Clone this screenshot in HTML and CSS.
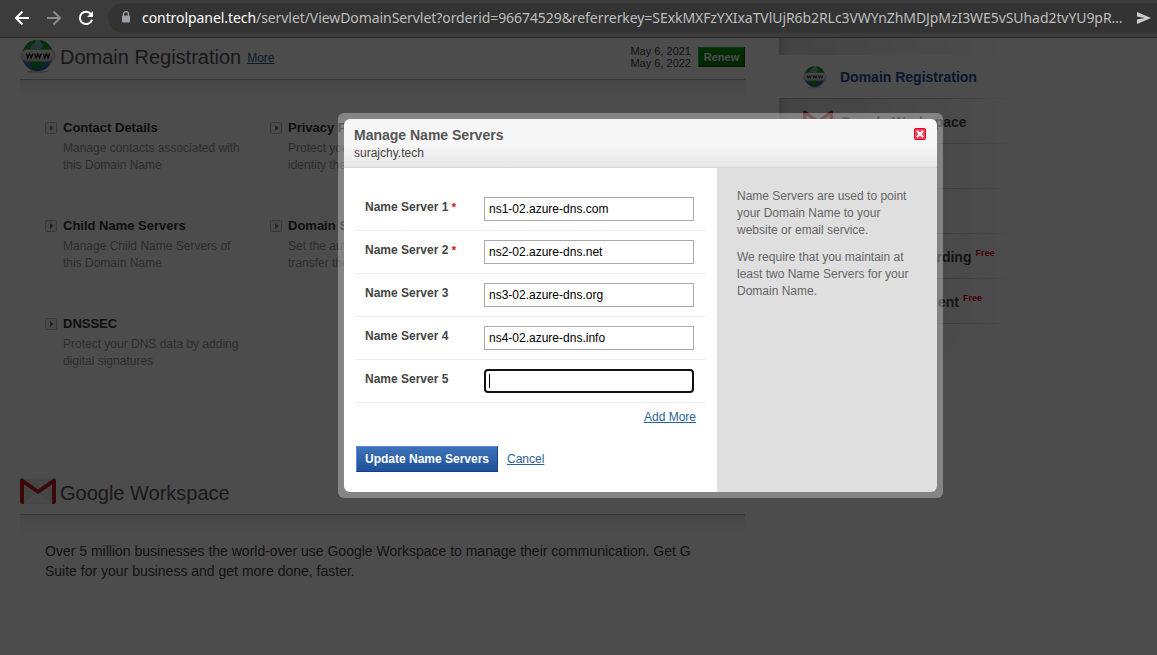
FILE: index.html
```html
<!DOCTYPE html>
<html lang="en">
<head>
<meta charset="utf-8">
<title>Manage Name Servers</title>
<link rel="stylesheet" href="styles.css">
</head>
<body>
<svg class="defs" width="0" height="0" aria-hidden="true">
  <defs>
    <linearGradient id="sea" x1="0" y1="0" x2="0" y2="1"><stop offset="0" stop-color="#8fc89a"/><stop offset=".5" stop-color="#5b9fd0"/><stop offset="1" stop-color="#1c5c96"/></linearGradient>
    <linearGradient id="plate" x1="0" y1="0" x2="0" y2="1"><stop offset="0" stop-color="#f4f4f4"/><stop offset="1" stop-color="#cfcfcf"/></linearGradient>
    <symbol id="globe" viewBox="0 0 36 36">
      <ellipse cx="18" cy="33.500" rx="11" ry="1.500" fill="#ccc"/>
      <circle cx="17.500" cy="17.500" r="15.500" fill="url(#sea)"/>
      <path d="M3 13C5 6 10 2.500 16 2l-1 3-4 2-1 4-4 2zM20 2c6 1 11 5 12.500 11H24l-3-3 3-3-3-2z" fill="#129a22"/>
      <path d="M10 24l9-1 5 2-4 3-3 4-4-3z" fill="#129a22"/>
      <rect x="1" y="11.500" width="34" height="12" rx="6" fill="url(#plate)" stroke="#999" stroke-width=".7"/>
      <path d="M6.300 15.500l1.500 4.500 1.700-4 1.700 4 1.500-4.500M14.700 15.500l1.500 4.500 1.700-4 1.700 4 1.500-4.500M23.100 15.500l1.500 4.500 1.700-4 1.700 4 1.500-4.500" fill="none" stroke="#111" stroke-width="1.300"/>
    </symbol>
    <symbol id="mail" viewBox="0 0 36 26">
      <rect x="2" y=".5" width="32" height="25" rx="1" fill="#e8e8e8"/>
      <path d="M4 25l14-12 14 12z" fill="#f5f5f5" stroke="#d5d5d5" stroke-width=".6"/>
      <path d="M0 2.500Q0 0 2.500.4L18 11.500 33.500.4Q36 0 36 2.500V24q0 2-2 2h-2V6.500L18 16 4 6.500V26H2q-2 0-2-2z" fill="#c3202b"/>
    </symbol>
    <symbol id="play" viewBox="0 0 12 12"><rect x=".5" y=".5" width="11" height="11" rx="1" fill="#f6f6f6" stroke="#bbb"/><path d="M5 3l3.500 3L5 9z" fill="#777"/></symbol>
  </defs>
</svg>
<header class="toolbar">
  <svg class="nav" width="16" height="16" viewBox="0 0 16 16"><path d="M8.500 1.500L2 8l6.500 6.500M2 8h13" fill="none" stroke="#fff" stroke-width="2"/></svg>
  <svg class="nav" width="16" height="16" viewBox="0 0 16 16"><path d="M7.500 1.500L14 8l-6.500 6.500M14 8H1" fill="none" stroke="#8b8b8b" stroke-width="2"/></svg>
  <svg class="nav" width="16" height="16" viewBox="0 0 16 16"><path d="M13.300 4.500A6.200 6.200 0 1 0 14 9.700" fill="none" stroke="#fff" stroke-width="2"/><path d="M15 1v6H9z" fill="#fff"/></svg>
  <div class="address">
    <svg class="lock" width="10" height="12" viewBox="0 0 10 12"><path d="M2.500 5V3.200a2.500 2.500 0 0 1 5 0V5" fill="none" stroke="#9aa0a6" stroke-width="1.300"/><rect x="1" y="4.500" width="8" height="7" rx=".8" fill="#9aa0a6"/></svg>
    <span class="host">controlpanel.tech</span><span class="path">/servlet/ViewDomainServlet?orderid=96674529&amp;referrerkey=SExkMXFzYXIxaTVlUjR6b2RLc3VWYnZhMDJpMzI3WE5vSUhad2tvYU9pR…</span>
    <svg class="send" width="16" height="14" viewBox="0 0 16 14"><path d="M1 1l14 6-14 6V8.500L9 7 1 5.500z" fill="#ccc"/></svg>
  </div>
</header>
<div class="page">
  <main class="main">
    <section class="product">
      <div class="product-head">
        <svg class="globe" width="36" height="36"><use href="#globe"/></svg>
        <h2>Domain Registration</h2><a class="more">More</a>
        <div class="dates">May 6, 2021<br>May 6, 2022</div>
        <button class="renew">Renew</button>
      </div>
      <div class="tiles">
        <div class="tile"><svg width="12" height="12"><use href="#play"/></svg><div><h3>Contact Details</h3><p>Manage contacts associated with this Domain Name</p></div></div>
        <div class="tile"><svg width="12" height="12"><use href="#play"/></svg><div><h3>Privacy P</h3><p>Protect you<br>identity the</p></div></div>
        <div class="tile"><svg width="12" height="12"><use href="#play"/></svg><div><h3>Child Name Servers</h3><p>Manage Child Name Servers of this Domain Name</p></div></div>
        <div class="tile"><svg width="12" height="12"><use href="#play"/></svg><div><h3>Domain S</h3><p>Set the aut<br>transfer the</p></div></div>
        <div class="tile"><svg width="12" height="12"><use href="#play"/></svg><div><h3>DNSSEC</h3><p>Protect your DNS data by adding digital signatures</p></div></div>
      </div>
    </section>
    <section class="product workspace">
      <div class="product-head">
        <svg class="mail" width="36" height="26"><use href="#mail"/></svg>
        <h2>Google Workspace</h2>
      </div>
      <p class="pitch">Over 5 million businesses the world-over use Google Workspace to manage their communication. Get G Suite for your business and get more done, faster.</p>
    </section>
  </main>
  <nav class="side">
    <div class="side-top"></div>
    <div class="side-item active"><svg width="24" height="24"><use href="#globe"/></svg><span>Domain Registration</span></div>
    <div class="side-item"><svg width="30" height="22"><use href="#mail"/></svg><span>Google Workspace</span></div>
    <div class="side-item"></div>
    <div class="side-item"><span>Email Service</span></div>
    <div class="side-item"><span>Domain Forwarding</span><sup>Free</sup></div>
    <div class="side-item"><span>DNS Management</span><sup>Free</sup></div>
    <div class="side-end"></div>
  </nav>
  <div class="overlay"></div>
  <div class="dialog">
    <div class="dialog-head">
      <div><h1>Manage Name Servers</h1><div class="domain">surajchy.tech</div></div>
      <svg width="12" height="12" viewBox="0 0 12 12"><rect x=".5" y=".5" width="11" height="11" rx="1" fill="#f0405a" stroke="#e60026"/><path d="M3 3l6 6M9 3L3 9" stroke="#fff" stroke-width="2"/></svg>
    </div>
    <div class="dialog-body">
      <form class="form">
        <div class="row"><label>Name Server 1 <b>*</b></label><input value="ns1-02.azure-dns.com"></div>
        <div class="row"><label>Name Server 2 <b>*</b></label><input value="ns2-02.azure-dns.net"></div>
        <div class="row"><label>Name Server 3</label><input value="ns3-02.azure-dns.org"></div>
        <div class="row"><label>Name Server 4</label><input value="ns4-02.azure-dns.info"></div>
        <div class="row"><label>Name Server 5</label><div class="focused"><i class="caret"></i></div></div>
        <div class="add"><a>Add More</a></div>
        <div class="actions"><button type="button" class="update">Update Name Servers</button><a>Cancel</a></div>
      </form>
      <aside class="help">
        <p>Name Servers are used to point your Domain Name to your website or email service.</p>
        <p>We require that you maintain at least two Name Servers for your Domain Name.</p>
      </aside>
    </div>
  </div>
</div>
</body>
</html>
```

FILE: styles.css
```css
* { box-sizing: border-box; }
body { margin: 0; width: 1157px; height: 655px; overflow: hidden; background: #fff; font: 12px/17px "Liberation Sans", Arial, sans-serif; color: #666; }
h1, h2, h3, p { margin: 0; font-weight: normal; }
svg { flex: none; display: block; }
.defs { position: absolute; }

/* Browser bar */
.toolbar { display: flex; align-items: center; height: 38px; padding: 0 0 2px 14px; background: #3c3c3c; border-bottom: 1px solid #272727; }
.nav { margin-right: 16px; }
.address { flex: 1; display: flex; align-items: center; height: 30px; margin-left: -2px; padding-left: 13px; background: #333; border-radius: 15px 0 0 15px; font: 14px/20px "Noto Sans", "Open Sans", sans-serif; letter-spacing: -.07px; color: #bdbdbd; white-space: nowrap; }
.host { margin-left: 11px; color: #fff; }
.lock { margin-top: -2px; }
.send { margin-left: auto; margin-right: 5px; }

/* Page under the dialog */
.page { position: relative; display: flex; height: 617px; }
.overlay { position: absolute; inset: 0; background: rgba(0, 0, 0, .7); }
.main { width: 725px; margin-left: 20px; }
.product-head { display: flex; align-items: center; height: 41px; position: relative; }
.product-head::after { content: ""; position: absolute; left: 0; right: 0; top: 41px; height: 20px; border-top: 1px solid #b5b5b5; background: linear-gradient(#eee, #fff); }
.globe { margin-top: -5px; }
h2 { margin: -3px 0 0 4px; font-size: 20px; line-height: 24px; color: #555; }
.more { margin-left: 6px; color: #1f6298; text-decoration: underline; }
.dates { margin: -3px 7px 0 auto; font-size: 11px; line-height: 12px; color: #444; }
.renew { width: 47px; height: 20px; margin-top: -3px; padding: 0; border: 1px solid; border-color: #2eb82e #006000 #006000 #2eb82e; background: linear-gradient(#0a9a14, #007a00); color: #fff; font: bold 11px/16px "Liberation Sans", Arial, sans-serif; }
.tiles { display: grid; grid-template-columns: 225px 225px; grid-auto-rows: 98px; padding: 38px 0 0 25px; }
.tile { display: flex; gap: 6px; padding-right: 20px; }
.tile svg { margin-top: 5px; }
h3 { margin-bottom: 3px; padding-top: 1px; font-size: 13px; line-height: 20px; font-weight: bold; color: #333; }
.tile p { margin-top: -1px; color: #999; }
.workspace { margin-top: 62px; }
.mail { margin-top: -5px; }
.workspace h2 { margin-top: -1px; }
.pitch { padding: 27px 25px; font-size: 14px; line-height: 20px; color: #444; }

.side { width: 245px; margin-left: 34px; }
.side-top { height: 17px; background: linear-gradient(90deg, #c8c8c8, #e2e2e2 3%, #fff 96%); }
.side-item { display: flex; align-items: center; height: 45px; padding-left: 61px; font-size: 14px; font-weight: bold; color: #444; white-space: nowrap; background: linear-gradient(90deg, #b4b4b4, #c8c8c8 65%, #fff 98%) 0 0 / 100% 1px no-repeat, linear-gradient(90deg, #c8c8c8, #e2e2e2 3%, #fff 96%); }
.side-item.active { height: 43px; background: none; color: #2050a0; }
.side-item svg { margin-right: 13px; margin-left: -37px; }
.side-item:nth-child(3) svg { margin-right: 7px; }
.side-item span { margin-top: 3px; }
.side-item.active span { margin-top: 1px; }
sup { margin: -5px 0 0 4px; font-size: 9px; line-height: 9px; color: #e00000; }
.side-end { height: 110px; background: linear-gradient(90deg, #b4b4b4, #c8c8c8 65%, #fff 98%) 0 0 / 100% 1px no-repeat, linear-gradient(rgba(255, 255, 255, 0), #fff), linear-gradient(90deg, #e4e4e4, #fff 96%); }

/* Dialog */
.dialog { position: absolute; left: 338px; top: 75px; width: 605px; height: 385px; padding: 6px; background: rgba(255, 255, 255, .32); border-radius: 6px; }
.dialog-head { display: flex; justify-content: space-between; height: 49px; padding: 8px 11px 0 10px; border-radius: 6px 6px 0 0; border-bottom: 1px solid #d6d6d6; background: linear-gradient(#f7f7f7 55%, #e6e6e6); color: #555; }
h1 { font-size: 14px; line-height: 17px; font-weight: bold; color: #555; }
.dialog-head svg { margin-top: 1px; }
.domain { line-height: 18px; color: #444; }
.dialog-body { display: flex; height: 324px; }
.form { width: 373px; padding: 20px 12px 0; background: #fff; border-radius: 0 0 0 6px; }
.row { display: flex; height: 43px; padding: 9px 0 0 9px; border-bottom: 1px solid #eaeaea; }
label { width: 119px; padding-top: 2px; font-weight: bold; color: #444; }
label b { font-size: 11px; line-height: 11px; color: #d00; }
input { width: 210px; height: 24px; padding: 0 4px; border: 1px solid #aaa; background: #fff; color: #000; font: 12px "Liberation Sans", Arial, sans-serif; }
.focused { width: 210px; height: 24px; padding: 3px 3px; border: 2px solid #101010; border-radius: 4px; }
.caret { display: block; width: 1px; height: 14px; background: #000; }
a { color: #2a6496; text-decoration: underline; }
.add { padding: 6px 9px 0; text-align: right; }
.actions { display: flex; align-items: center; gap: 9px; margin-top: 20px; }
.update { width: 142px; height: 26px; padding: 0; border: 1px solid; border-color: #5b84e6 #163f80 #163f80 #5b84e6; background: linear-gradient(#3d72b8, #1f5199); color: #fff; font: bold 12px "Liberation Sans", Arial, sans-serif; }
.help { width: 220px; padding: 20px 20px; background: #dfdfdf; border-radius: 0 0 6px 0; color: #666; }
.help p { margin-bottom: 10px; }
```
